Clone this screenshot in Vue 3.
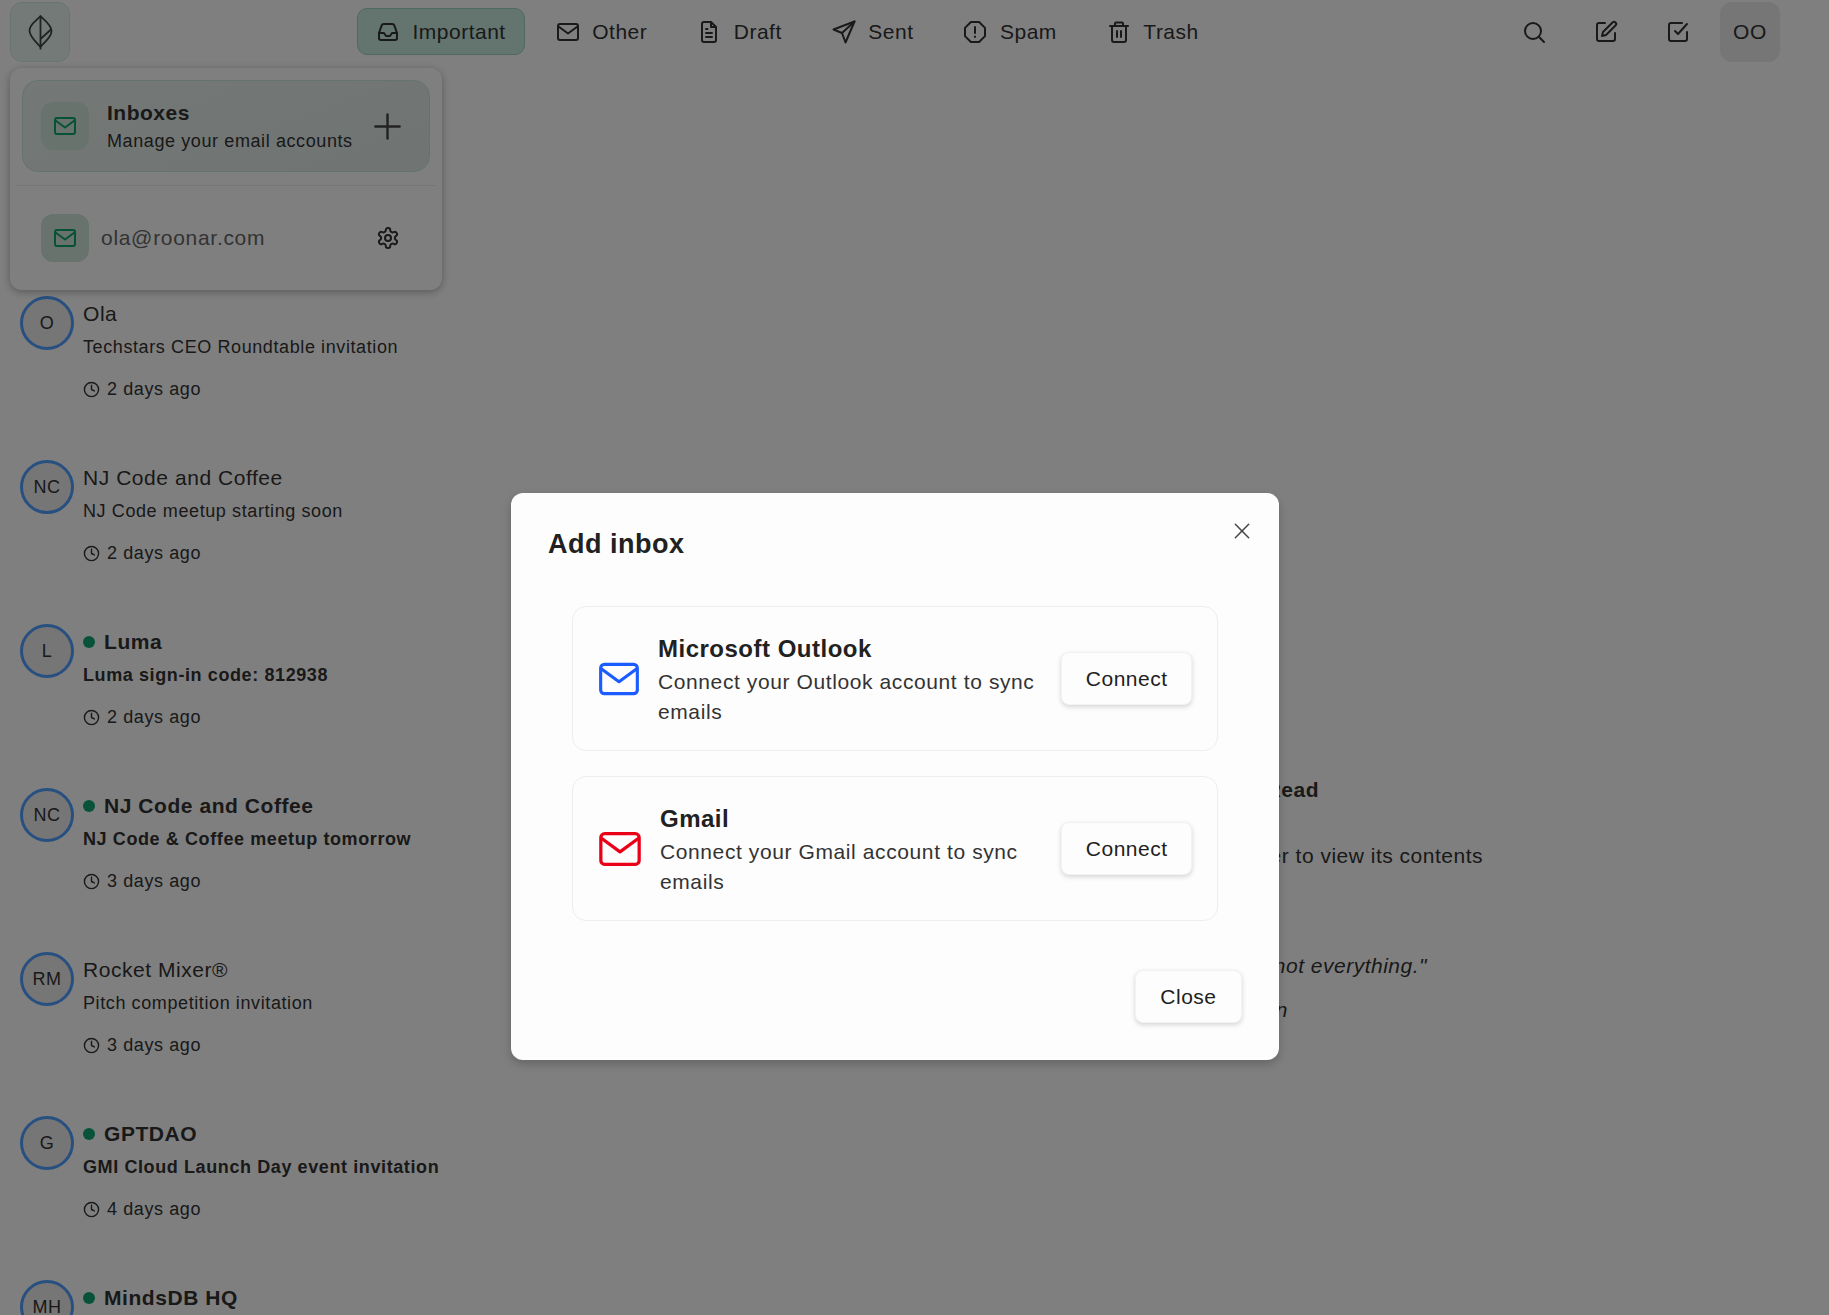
<script setup>
const icons = {
  inbox: ['M3 13l2.6-7.4A2.4 2.4 0 0 1 7.9 4h8.2a2.4 2.4 0 0 1 2.3 1.6L21 13v5a2 2 0 0 1-2 2H5a2 2 0 0 1-2-2z', 'M3 13h5l2 3h4l2-3h5'],
  mail: ['M4 4h16a2 2 0 0 1 2 2v12a2 2 0 0 1-2 2H4a2 2 0 0 1-2-2V6a2 2 0 0 1 2-2z', 'M2.5 6.5L12 13.5l9.5-7'],
  draft: ['M14 2H7a2 2 0 0 0-2 2v16a2 2 0 0 0 2 2h10a2 2 0 0 0 2-2V7z', 'M14 2v5h5', 'M9 9h1.5', 'M9 13h6', 'M9 17h6'],
  sent: ['M22.5 1.5L1.5 9.5l8.5 3.5 3.5 9.5z', 'M22.5 1.5L10 13'],
  spam: ['M7.9 2h8.2L22 7.9v8.2L16.1 22H7.9L2 16.1V7.9z', 'M12 7v6', 'M12 16.5v.5'],
  trash: ['M3 6h18', 'M8 6V3.5a1 1 0 0 1 1-1h6a1 1 0 0 1 1 1V6', 'M5 6v14a2 2 0 0 0 2 2h10a2 2 0 0 0 2-2V6', 'M10 11v6', 'M14 11v6'],
  search: ['M19 11a8 8 0 1 1-16 0 8 8 0 0 1 16 0z', 'M22 22l-5.2-5.2'],
  edit: ['M11 3H5a2 2 0 0 0-2 2v14a2 2 0 0 0 2 2h14a2 2 0 0 0 2-2v-6', 'M18.5 2.5a2.1 2.1 0 0 1 3 3L12 15l-4 1 1-4z'],
  check: ['M21 12v7a2 2 0 0 1-2 2H5a2 2 0 0 1-2-2V5a2 2 0 0 1 2-2h11', 'M9 11l3 3 9-10'],
  gear: ['M12.22 2h-.44a2 2 0 0 0-2 2v.18a2 2 0 0 1-1 1.73l-.43.25a2 2 0 0 1-2 0l-.15-.08a2 2 0 0 0-2.73.73l-.22.38a2 2 0 0 0 .73 2.73l.15.1a2 2 0 0 1 1 1.72v.51a2 2 0 0 1-1 1.74l-.15.09a2 2 0 0 0-.73 2.73l.22.38a2 2 0 0 0 2.73.73l.15-.08a2 2 0 0 1 2 0l.43.25a2 2 0 0 1 1 1.73V20a2 2 0 0 0 2 2h.44a2 2 0 0 0 2-2v-.18a2 2 0 0 1 1-1.73l.43-.25a2 2 0 0 1 2 0l.15.08a2 2 0 0 0 2.73-.73l.22-.39a2 2 0 0 0-.73-2.73l-.15-.08a2 2 0 0 1-1-1.74v-.5a2 2 0 0 1 1-1.74l.15-.09a2 2 0 0 0 .73-2.73l-.22-.38a2 2 0 0 0-2.73-.73l-.15.08a2 2 0 0 1-2 0l-.43-.25a2 2 0 0 1-1-1.73V4a2 2 0 0 0-2-2z', 'M15 12a3 3 0 1 1-6 0 3 3 0 0 1 6 0z'],
  clock: ['M22 12a10 10 0 1 1-20 0 10 10 0 0 1 20 0z', 'M12 6v6l4 2'],
  plus: ['M12 2v20', 'M2 12h20'],
  x: ['M4 4l16 16', 'M20 4L4 20'],
}
const tabs = [
  { label: 'Important', icon: 'inbox', active: true },
  { label: 'Other', icon: 'mail' },
  { label: 'Draft', icon: 'draft' },
  { label: 'Sent', icon: 'sent' },
  { label: 'Spam', icon: 'spam' },
  { label: 'Trash', icon: 'trash' },
]
const actions = ['search', 'edit', 'check']
const mails = [
  { initials: 'O', name: 'Ola', subject: 'Techstars CEO Roundtable invitation', time: '2 days ago' },
  { initials: 'NC', name: 'NJ Code and Coffee', subject: 'NJ Code meetup starting soon', time: '2 days ago' },
  { initials: 'L', name: 'Luma', subject: 'Luma sign-in code: 812938', time: '2 days ago', unread: true },
  { initials: 'NC', name: 'NJ Code and Coffee', subject: 'NJ Code & Coffee meetup tomorrow', time: '3 days ago', unread: true },
  { initials: 'RM', name: 'Rocket Mixer®', subject: 'Pitch competition invitation', time: '3 days ago' },
  { initials: 'G', name: 'GPTDAO', subject: 'GMI Cloud Launch Day event invitation', time: '4 days ago', unread: true },
  { initials: 'MH', name: 'MindsDB HQ', unread: true },
]
const providers = [
  { name: 'Microsoft Outlook', desc: 'Connect your Outlook account to sync emails', tone: 'blue' },
  { name: 'Gmail', desc: 'Connect your Gmail account to sync emails', tone: 'red' },
]
</script>

<template>
  <div class="page">
    <header class="topbar">
      <div class="logo">
        <svg width="25" height="36" viewBox="0 0 25 36" fill="none" stroke="#3a4a46" stroke-width="1.8" stroke-linejoin="round">
          <path d="M12.5 2C16 6.5 23.5 10 23.5 17.5 23.5 23 16.5 28 12.5 33 8.5 28 1.5 23 1.5 16.5 1.5 10 9 6.5 12.5 2z" />
          <path d="M12.5 2v33.5M12.5 25l11-10" />
        </svg>
      </div>
      <nav class="tabs">
        <a v-for="t in tabs" :key="t.label" class="tab" :class="{ active: t.active }">
          <svg class="ico" viewBox="0 0 24 24"><path v-for="d in icons[t.icon]" :key="d" :d="d" /></svg>
          <span>{{ t.label }}</span>
        </a>
      </nav>
      <div class="actions">
        <button v-for="a in actions" :key="a" class="action">
          <svg class="ico" viewBox="0 0 24 24"><path v-for="d in icons[a]" :key="d" :d="d" /></svg>
        </button>
        <div class="action user">OO</div>
      </div>
    </header>

    <main class="body">
      <section class="list">
        <article v-for="(m, i) in mails" :key="i" class="mail" :class="{ unread: m.unread }">
          <div class="avatar">{{ m.initials }}</div>
          <div class="mail-text">
            <div class="sender"><i v-if="m.unread" class="dot"></i>{{ m.name }}</div>
            <template v-if="m.subject">
              <div class="subject">{{ m.subject }}</div>
              <div class="time">
                <svg class="clock" viewBox="0 0 24 24"><path v-for="d in icons.clock" :key="d" :d="d" /></svg>
                <span>{{ m.time }}</span>
              </div>
            </template>
          </div>
        </article>
      </section>
      <section class="detail">
        <h2 class="d-title">to Read</h2>
        <p class="d-hint">folder to view its contents</p>
        <p class="d-quote">not everything."</p>
        <p class="d-author">Olan</p>
      </section>
    </main>

    <div class="menu">
      <div class="menu-head">
        <span class="mail-box">
          <svg class="ico green" viewBox="0 0 24 24"><path v-for="d in icons.mail" :key="d" :d="d" /></svg>
        </span>
        <div class="menu-text">
          <strong>Inboxes</strong>
          <span>Manage your email accounts</span>
        </div>
        <svg class="plus" viewBox="0 0 24 24"><path v-for="d in icons.plus" :key="d" :d="d" /></svg>
      </div>
      <hr class="rule" />
      <div class="menu-row">
        <span class="mail-box">
          <svg class="ico green" viewBox="0 0 24 24"><path v-for="d in icons.mail" :key="d" :d="d" /></svg>
        </span>
        <span class="address">ola@roonar.com</span>
        <svg class="gear" viewBox="0 0 24 24"><path v-for="d in icons.gear" :key="d" :d="d" /></svg>
      </div>
    </div>

    <div class="overlay">
      <div class="modal">
        <button class="close-x">
          <svg viewBox="0 0 24 24"><path v-for="d in icons.x" :key="d" :d="d" /></svg>
        </button>
        <h1 class="m-title">Add inbox</h1>
        <div class="cards">
          <div v-for="p in providers" :key="p.name" class="card">
            <svg class="p-icon" :class="p.tone" viewBox="0 0 24 24"><path v-for="d in icons.mail" :key="d" :d="d" /></svg>
            <div class="p-text">
              <h3>{{ p.name }}</h3>
              <p>{{ p.desc }}</p>
            </div>
            <button class="btn">Connect</button>
          </div>
        </div>
        <div class="m-foot"><button class="btn">Close</button></div>
      </div>
    </div>
  </div>
</template>

<style scoped>
.page {
  position: relative;
  height: 1315px;
  overflow: hidden;
  background: #fff;
  color: #333;
  font-family: "Liberation Sans", Arial, sans-serif;
  font-size: 18px;
  letter-spacing: .6px;
}
button { font: inherit; letter-spacing: inherit; color: inherit; background: none; border: 0; padding: 0; }
.ico { width: 24px; height: 24px; fill: none; stroke: #333; stroke-width: 2; stroke-linecap: round; stroke-linejoin: round; flex: none; }
.topbar { display: flex; align-items: flex-start; padding: 2px 49px 0 10px; height: 64px; }
.logo { width: 60px; height: 60px; border-radius: 12px; background: #e6f5f0; border: 1px solid #d2ebe3; display: flex; align-items: center; justify-content: center; box-sizing: border-box; }
.tabs { display: flex; gap: 12px; margin-left: 287px; margin-top: 6px; }
.tab { display: flex; align-items: center; gap: 12.5px; height: 47px; padding: 0 18px; border: 1px solid transparent; border-radius: 10px; font-size: 21px; letter-spacing: .5px; box-sizing: border-box; }
.tab.active { background: #c6eadd; border-color: #9bd4c2; }
.actions { display: flex; gap: 12px; margin-left: auto; }
.action { width: 60px; height: 60px; display: flex; align-items: center; justify-content: center; border-radius: 12px; font-size: 21px; }
.user { background: #ececec; }
.body { display: flex; }
.list { width: 470px; flex: none; padding: 230px 0 0 20px; box-sizing: border-box; }
.mail { display: flex; gap: 9px; height: 164px; }
.mail-text { padding-top: 3px; }
.avatar { width: 54px; height: 54px; flex: none; box-sizing: border-box; border: 3px solid #4f9fff; border-radius: 50%; background: #ececec; display: flex; align-items: center; justify-content: center; font-size: 18px; letter-spacing: .5px; }
.sender { font-size: 21px; line-height: 30px; height: 30px; display: flex; align-items: center; letter-spacing: .55px; }
.subject { line-height: 30px; margin-top: 3px; }
.time { display: flex; align-items: center; gap: 7px; margin-top: 14px; line-height: 26px; }
.clock { width: 17px; height: 17px; fill: none; stroke: #333; stroke-width: 2; stroke-linecap: round; stroke-linejoin: round; }
.unread .sender, .unread .subject { font-weight: 700; }
.dot { width: 12px; height: 12px; border-radius: 50%; background: #0fa573; margin-right: 9px; flex: none; }
.detail { flex: 1; display: flex; flex-direction: column; align-items: flex-end; padding: 709px 346px 0 0; font-size: 21px; line-height: 30px; letter-spacing: .5px; }
.d-title { margin: 0 164px 0 0; font-size: 21px; line-height: 30px; }
.d-hint { margin: 36px 0 0; }
.d-quote { margin: 80px 56px 0 0; font-style: italic; }
.d-author { margin: 14px 195px 0 0; font-style: italic; }
.menu { position: absolute; left: 10px; top: 68px; width: 432px; height: 222px; box-sizing: border-box; padding: 12px 12px 0; background: #fff; border-radius: 12px; box-shadow: 0 2px 8px rgba(0,0,0,.3); z-index: 2; }
.menu-head { display: flex; align-items: center; height: 92px; box-sizing: border-box; padding: 0 27px 0 18px; border: 1px solid #c7e8dd; border-radius: 16px; background: linear-gradient(160deg, #e8f2ef, #e0e9e6); }
.mail-box { width: 48px; height: 48px; flex: none; display: flex; align-items: center; justify-content: center; border-radius: 12px; background: #d0e6dd; }
.green { stroke: #0ea271; }
.menu-text { display: flex; flex-direction: column; margin-left: 18px; padding-top: 2px; flex: 1; line-height: 28px; letter-spacing: .6px; }
.menu-text strong { font-size: 21px; letter-spacing: .5px; }
.plus { width: 29px; height: 29px; flex: none; fill: none; stroke: #444; stroke-width: 2; stroke-linecap: round; }
.rule { border: 0; border-top: 1px solid #eaeaea; margin: 13px -6px 0; }
.menu-row { display: flex; align-items: center; padding: 0 30px 0 19px; margin-top: 28px; }
.address { margin-left: 12px; flex: 1; font-size: 21px; letter-spacing: .7px; color: #666; }
.gear { width: 24px; height: 24px; fill: none; stroke: #333; stroke-width: 2; stroke-linejoin: round; }
.overlay { position: absolute; inset: 0; z-index: 5; background: rgba(0,0,0,.5); padding: 493px 0 0 511px; box-sizing: border-box; }
.modal { position: relative; width: 768px; height: 567px; box-sizing: border-box; padding: 31px 37px 0; background: #fdfdfd; border-radius: 12px; box-shadow: 0 4px 10px rgba(0,0,0,.2); color: #212121; letter-spacing: .5px; }
.close-x { position: absolute; right: 27px; top: 28px; width: 20px; height: 20px; }
.close-x svg { display: block; width: 100%; height: 100%; fill: none; stroke: #444; stroke-width: 1.8; stroke-linecap: round; }
.m-title { margin: 0; font-size: 27px; line-height: 40px; font-weight: 700; }
.cards { display: flex; flex-direction: column; gap: 25px; margin: 42px 24px 0; }
.card { display: flex; align-items: center; height: 145px; box-sizing: border-box; padding: 0 25px 0 24px; border: 1px solid #eee; border-radius: 14px; }
.p-icon { width: 44px; height: 44px; flex: none; fill: none; stroke-width: 1.7; stroke-linecap: round; stroke-linejoin: round; }
.p-icon.red { width: 46px; height: 46px; }
.blue { stroke: #1a5cff; }
.red { stroke: #ea0017; }
.p-text { flex: 1; margin-left: 17px; color: #333; }
.p-text h3 { margin: 0; font-size: 24px; line-height: 36px; color: #212121; }
.p-text p { margin: 0; font-size: 21px; line-height: 30px; letter-spacing: .6px; }
.btn { height: 53px; padding: 0 23.5px; background: #fdfdfd; border: 1px solid #f2f2f2; border-radius: 8px; font-size: 21px; box-shadow: 0 2px 5px rgba(0,0,0,.16); flex: none; }
.m-foot { display: flex; justify-content: flex-end; margin-top: 49px; }
.m-foot .btn { padding: 0 24.5px; }
</style>

<style>
html, body { margin: 0; overflow: hidden; }
</style>
